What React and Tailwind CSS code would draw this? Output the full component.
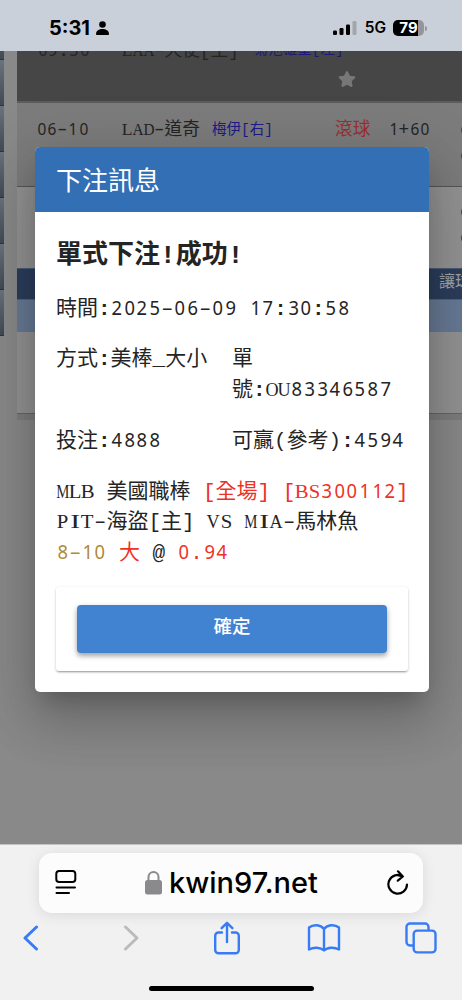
import clsx from 'clsx';
import { FaStar } from 'react-icons/fa';

// typewriter look: serif capitals stretched or squeezed into one cell
function glyphClass(ch) {
  if (/[0-9]/.test(ch)) return 'font-["Noto_Sans"] text-[0.95em] scale-x-92';
  if (ch === 'M') return 'font-["Liberation_Serif"] text-[0.94em] scale-x-75';
  if (ch === 'I') return 'font-["Liberation_Serif"] text-[0.94em] scale-x-150';
  if (/[OUVAD]/.test(ch)) return 'font-["Liberation_Serif"] text-[0.94em] scale-x-92';
  if (/[PSLBT]/.test(ch)) return 'font-["Liberation_Serif"] text-[0.94em] scale-x-105';
  if (ch === '-') return 'scale-x-150';
  if (ch === ':') return 'font-bold';
  return '';
}

// Latin characters sit in 0.6em cells, CJK keeps its full em width
function Mono({ children, className }) {
  return (
    <span className={className}>
      {[...children].map((ch, i) => {
        if (ch.charCodeAt(0) > 255) return ch;
        return (
          <span key={i} className="inline-flex w-[0.6em] justify-center leading-none whitespace-pre">
            <span className={clsx('leading-none', glyphClass(ch))}>{ch}</span>
          </span>
        );
      })}
    </span>
  );
}

function StatusBar() {
  return (
    <header className="relative z-20 flex h-[51px] shrink-0 items-center bg-[#cad0d9] pr-[35px] pl-[49px] pt-[5px] font-['Inter'] text-black">
      <span className="w-[42px] text-[20px] font-bold">5:31</span>
      <svg className="ml-[5px] h-[14px] w-[13px]" viewBox="0 0 13 14">
        <circle cx="6.5" cy="3.5" r="3.3" />
        <path d="M0 13.2c0-3.6 3-5.2 6.5-5.2s6.5 1.6 6.5 5.2c0 .5-.3.8-.8.8H.8c-.5 0-.8-.3-.8-.8z" />
      </svg>
      <svg className="ml-auto h-[14px] w-[24px]" viewBox="0 0 24 14">
        <rect x="0" y="9.5" width="4" height="4.5" rx="1.2" />
        <rect x="6.5" y="7" width="4" height="7" rx="1.2" />
        <rect x="13" y="3.5" width="4" height="10.5" rx="1.2" />
        <rect x="19.5" y="0" width="4" height="14" rx="1.2" fill="#a2a6ae" />
      </svg>
      <span className="ml-[8px] text-[15.5px] font-semibold">5G</span>
      <div className="ml-[7px] flex h-[16px] w-[31px] items-center justify-center rounded-[5px] bg-[linear-gradient(90deg,#000_80%,#93959b_80%)] text-[15px] font-bold text-white">79</div>
      <span className="ml-[1px] h-[5px] w-[2px] rounded-r-full bg-[#93959b]" />
    </header>
  );
}

function Dots({ className }) {
  return (
    <div className={clsx('flex flex-col gap-[14px]', className)}>
      <i className="h-[12px] w-[12px] rounded-full bg-[#7f302b]" />
      <i className="h-[12px] w-[12px] rounded-full bg-[#7f302b]" />
    </div>
  );
}

function OddsTable() {
  return (
    <div className="flex items-start text-[17.7px] text-[#242424]">
      <div className="-mt-[37px] w-[4px] shrink-0">
        {[1, 2, 3, 4, 5, 6, 7].map((n) => (
          <div key={n} className="h-[46px] border-b border-[#2e3540] bg-linear-to-b from-[#6b737e] to-[#414954]" />
        ))}
      </div>
      <div className="ml-[13px] w-[445px] overflow-hidden whitespace-nowrap">
        <div className="h-[52px] overflow-hidden border-b-2 border-[#5c5c5c] bg-[#464646]">
          <div className="-mt-[14px] flex h-[28px] items-center pl-[20px]">
            <Mono className="w-[85px]">09:30</Mono>
            <Mono>LAA-天使[主]</Mono>
            <Mono className="ml-[15px] text-[14.5px] text-[#1d1a78]">菊池雄星[左]</Mono>
          </div>
          <FaStar className="mt-[5px] ml-[321px] text-[18px] text-[#777]" />
        </div>
        <div className="flex h-[84px] items-start border-b border-[#555] bg-[#7c7c7c] pt-[14px] pl-[19px] *:shrink-0">
          <Mono className="w-[86px]">06-10</Mono>
          <Mono className="w-[90px]">LAD-道奇</Mono>
          <Mono className="w-[123px] pt-[3px] text-[14.5px] text-[#1d1a88]">梅伊[右]</Mono>
          <span className="w-[53px] text-[#9c3035]">滾球</span>
          <Mono className="w-[73px]">1+60</Mono>
          <Dots className="pt-[7px]" />
        </div>
        <div className="h-[81px] bg-[#939393] pt-[19px] pl-[444px] *:w-[12px]">
          <Dots />
        </div>
        <div className="h-[31px] border-t border-[#4b5b75] bg-[#2c3e5c] pl-[422px] text-[16px] leading-[28px] text-[#a0a5ad]">讓球</div>
        <div className="h-[32px] border-t border-[#52647d] bg-[#677a95]" />
        <div className="h-[82px] border-t border-[#777] bg-[#939393]" />
        <div className="h-[7px] border-t border-[#666] bg-[#7d7d7d]" />
      </div>
    </div>
  );
}

function BetDialog() {
  return (
    <section className="absolute top-[147px] left-[35px] z-10 h-[545px] w-[394px] rounded-[5px] bg-white text-[21px] leading-[30.3px] text-[#242424] shadow-[0_14px_20px_-9px_rgba(0,0,0,0.2),0_31px_50px_4px_rgba(0,0,0,0.14),0_12px_60px_10px_rgba(0,0,0,0.12)]">
      <h1 className="flex h-[65px] items-center rounded-t-[5px] bg-[#326fb5] pt-[8px] pl-[21px] text-[26px] text-white">下注訊息</h1>
      <div className="px-[21px] pt-[26px] pb-[21px]">
        <h2 className="h-[57px] text-[26px] leading-[37px] font-bold">
          <Mono>單式下注!成功!</Mono>
        </h2>
        <Mono className="block">時間:2025-06-09 17:30:58</Mono>
        <div className="mt-[20px] grid grid-cols-[176px_1fr]">
          <Mono>方式:美棒_大小</Mono>
          <div>
            <div>單</div>
            <Mono className="block">號:OU83346587</Mono>
          </div>
        </div>
        <div className="mt-[21px] grid grid-cols-[176px_1fr] whitespace-nowrap">
          <Mono>投注:4888</Mono>
          <Mono>可贏(參考):4594</Mono>
        </div>
        <div className="mt-[21px] whitespace-nowrap">
          <div>
            <Mono>MLB 美國職棒 </Mono>
            <Mono className="text-[#ee3124]">[全場] [BS300112]</Mono>
          </div>
          <Mono className="block">PIT-海盜[主] VS MIA-馬林魚</Mono>
          <div>
            <Mono className="text-[#b08a35]">8-10 </Mono>
            <Mono className="text-[#ee3124]">大</Mono>
            <Mono> @ </Mono>
            <Mono className="text-[#ee3124]">0.94</Mono>
          </div>
        </div>
        <div className="mt-[18px] h-[84px] rounded-[3px] px-[21px] pt-[18px] shadow-[0_1px_3px_rgba(0,0,0,0.2),0_2px_2px_-1px_rgba(0,0,0,0.28)]">
          <button className="flex h-[48px] w-full items-center justify-center rounded-[4px] bg-[#4183d0] text-[18.5px] leading-none font-medium text-white shadow-[0_3px_4px_rgba(0,0,0,0.25),0_2px_7px_rgba(0,0,0,0.16)]">確定</button>
        </div>
      </div>
    </section>
  );
}

function BrowserBar() {
  return (
    <footer className="relative z-20 h-[156px] shrink-0 border-t border-[#c4c4c4] bg-[#f1f1f1]">
      <div className="mx-[39px] mt-[8px] flex h-[60px] items-center rounded-[13px] bg-[#fcfcfc] pr-[14px] pl-[16px] shadow-[0_2px_14px_rgba(0,0,0,0.1)]">
        <svg className="h-[26px] w-[22px]" viewBox="0 0 22 26" fill="none" stroke="#000" strokeWidth="2" strokeLinecap="round">
          <rect x="1.3" y="1" width="19" height="11" rx="2.8" />
          <path d="M1.5 17.6h18.5M1.5 23h12.5" />
        </svg>
        <svg className="ml-[68px] h-[24px] w-[17px]" viewBox="0 0 17 24" fill="#8a8a8c">
          <rect x="0" y="9" width="17" height="14.5" rx="2.5" />
          <path d="M3.5 10V6a5 5 0 0 1 10 0V10" fill="none" stroke="#8a8a8c" strokeWidth="2" />
        </svg>
        <span className="ml-[7px] font-['Inter'] text-[29px] font-medium text-black">kwin97.net</span>
        <svg className="ml-auto h-[26px] w-[22px]" viewBox="0 0 22 26" fill="none" stroke="#000" strokeWidth="2.2" strokeLinecap="round" strokeLinejoin="round">
          <path d="M20 14.5A9.3 9.3 0 1 1 15.8 6.5L10.7 5.2M11 1.3l4.8 5.2-5 4.2" />
        </svg>
      </div>
      <nav className="mt-[7px] flex h-[36px] items-center pl-[23px] text-[#377cf6]">
        <svg className="h-[26px] w-[16px]" viewBox="0 0 16 26" fill="none" stroke="currentColor" strokeWidth="3" strokeLinecap="round" strokeLinejoin="round">
          <path d="M13.5 2L2 13l11.5 11" />
        </svg>
        <svg className="ml-[84px] h-[26px] w-[16px] text-[#bbb]" viewBox="0 0 16 26" fill="none" stroke="currentColor" strokeWidth="3" strokeLinecap="round" strokeLinejoin="round">
          <path d="M2.5 2L14 13 2.5 24" />
        </svg>
        <svg className="ml-[74px] h-[34px] w-[28px]" viewBox="0 0 28 34" fill="none" stroke="currentColor" strokeWidth="2.4" strokeLinecap="round" strokeLinejoin="round">
          <path d="M9 11.5H5.5a3.3 3.3 0 0 0-3.3 3.3V29a3.3 3.3 0 0 0 3.3 3.3h17A3.3 3.3 0 0 0 25.8 29V14.8a3.3 3.3 0 0 0-3.3-3.3H19M14 21V2M8.600 7.2L14 1.8l5.4 5.4" />
        </svg>
        <svg className="ml-[66px] h-[30px] w-[34px]" viewBox="0 0 34 30" fill="none" stroke="currentColor" strokeWidth="2.4" strokeLinejoin="round">
          <path d="M17 6C13.5 1.5 6.5 1 2 4.5V26.5C6.5 24 13.5 24 17 27.5C20.5 24 27.5 24 32 26.5V4.5C27.5 1 20.5 1.5 17 6zM17 6v21.5" />
        </svg>
        <svg className="ml-[64px] h-[32px] w-[32px]" viewBox="0 0 32 32" fill="none" stroke="currentColor" strokeWidth="2.4">
          <path d="M9 23.5H5a3.5 3.5 0 0 1-3.5-3.5V5A3.5 3.5 0 0 1 5 1.500h15A3.5 3.5 0 0 1 23.5 5v3.5" />
          <rect x="8.7" y="8.6" width="21.8" height="21.8" rx="3.5" />
        </svg>
      </nav>
      <div className="mx-auto mt-[30px] h-[5px] w-[165px] rounded-full bg-black" />
    </footer>
  );
}

export default function App() {
  return (
    <div className="relative flex h-[1000px] w-[462px] flex-col overflow-hidden bg-[#898989] font-['Liberation_Mono','Noto_Sans_CJK_TC',monospace]">
      <StatusBar />
      <main className="min-h-0 flex-1">
        <OddsTable />
        <BetDialog />
      </main>
      <BrowserBar />
    </div>
  );
}
